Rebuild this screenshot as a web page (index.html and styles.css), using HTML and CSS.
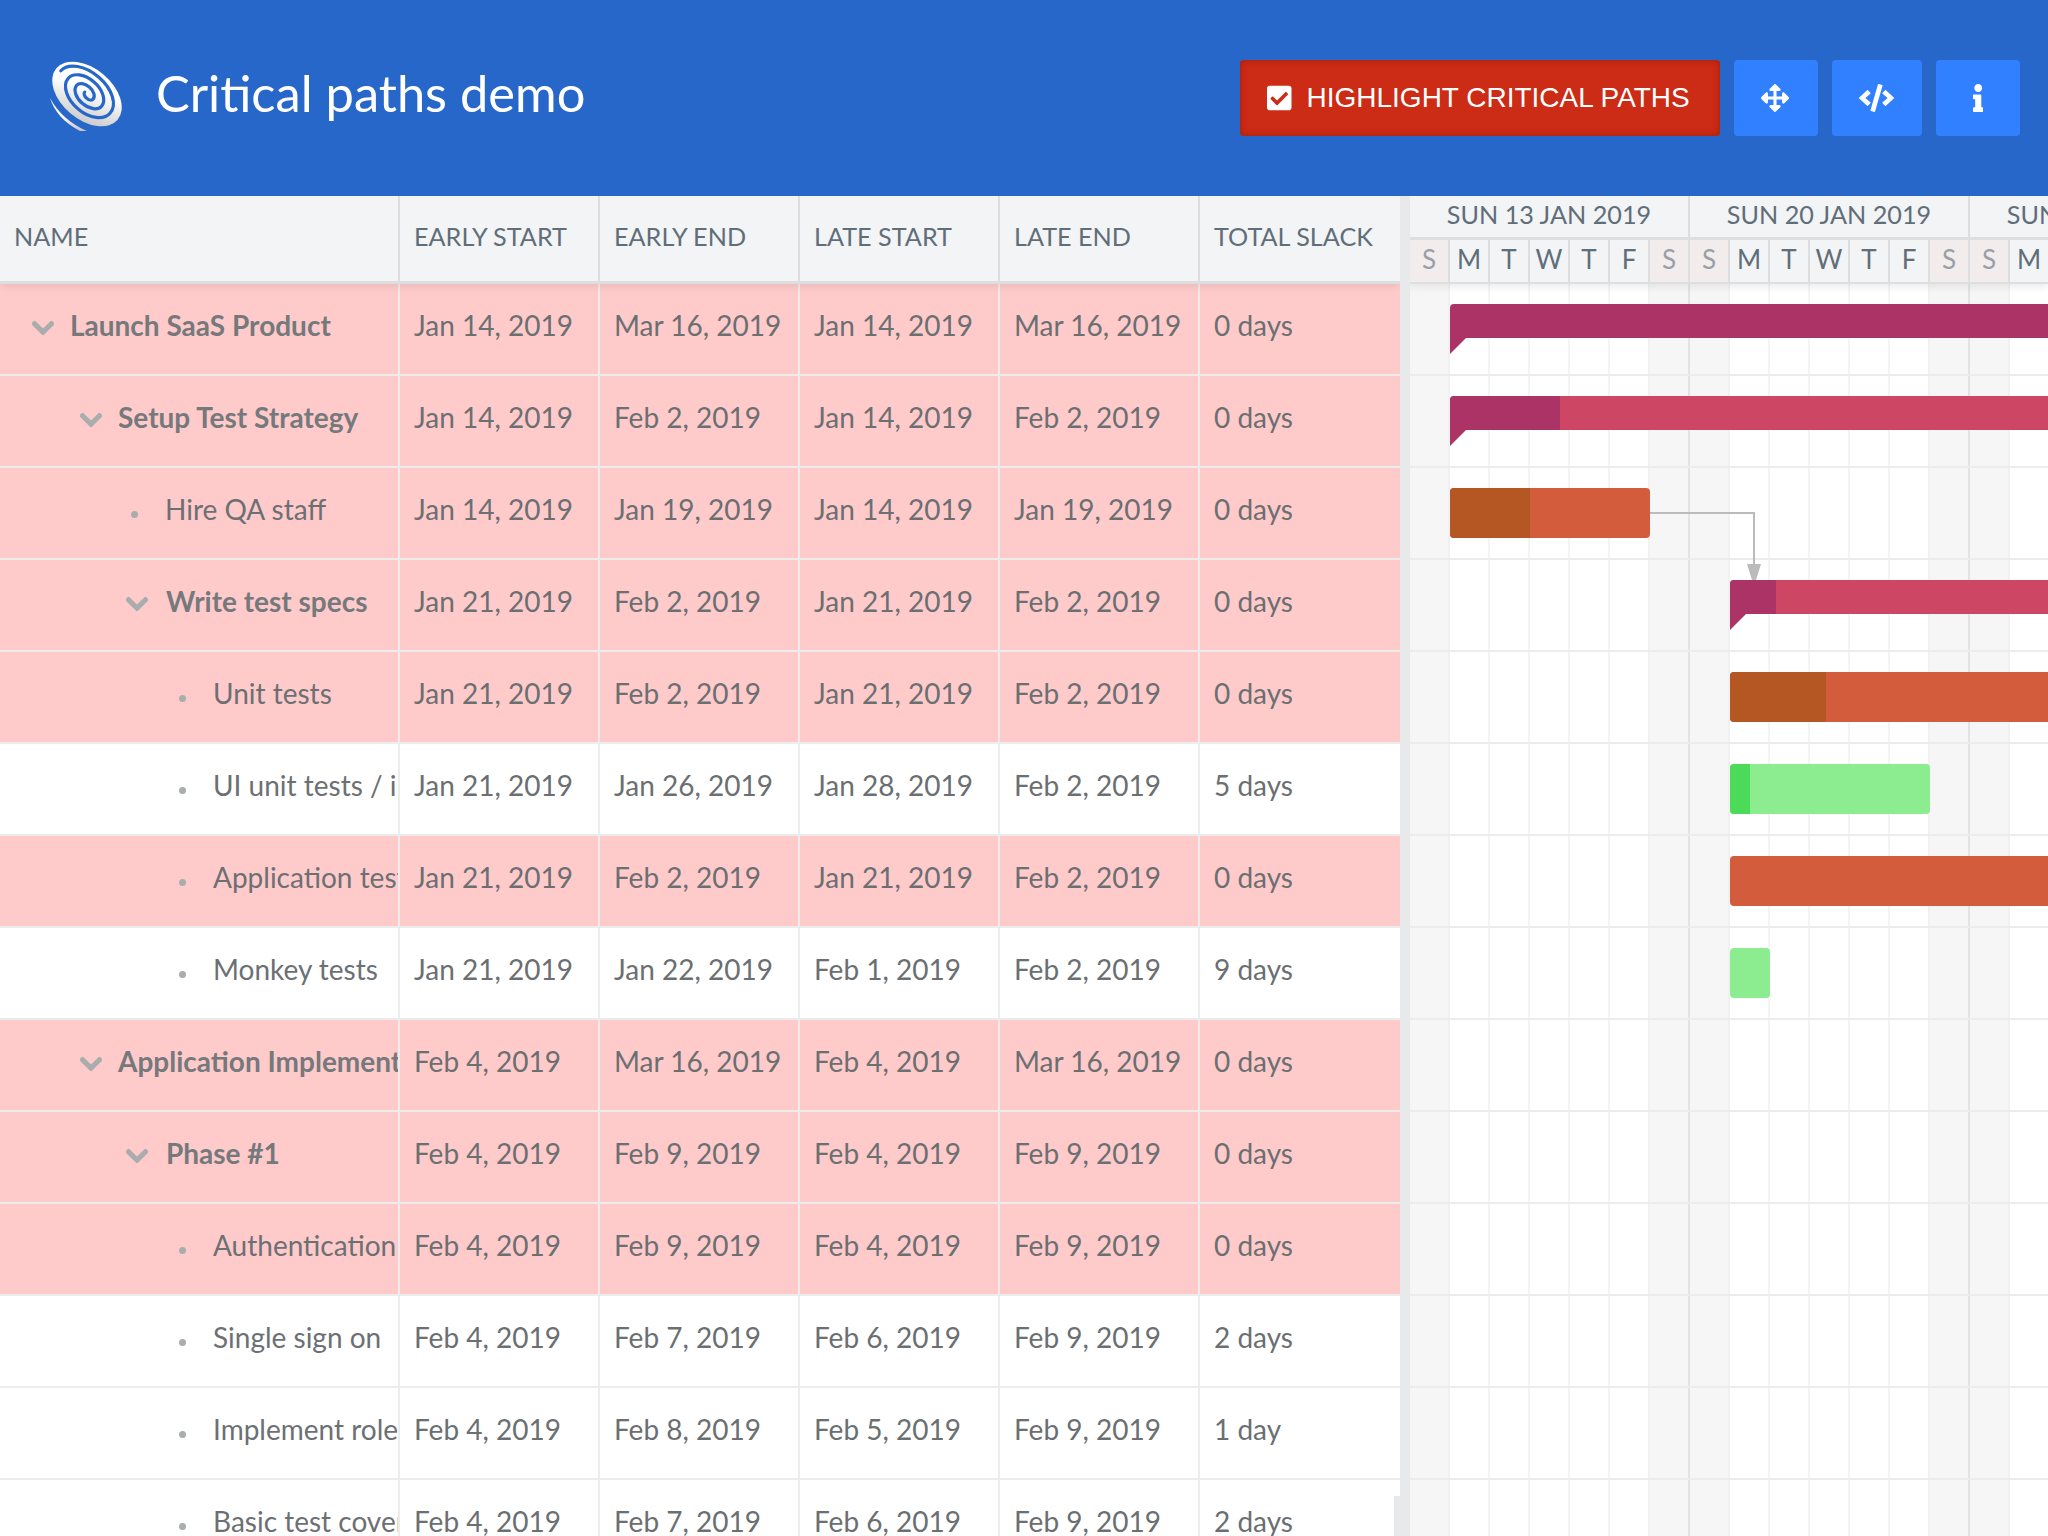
FILE: index.html
```html
<!DOCTYPE html>
<html lang="en">
<head>
<meta charset="utf-8">
<title>Critical paths demo</title>
<link rel="stylesheet" href="styles.css">
</head>
<body>
<svg class="defs" width="0" height="0" aria-hidden="true">
  <defs>
    <symbol id="chev" viewBox="0 0 448 512"><path d="M207.029 381.476L12.686 187.132c-9.373-9.373-9.373-24.569 0-33.941l22.667-22.667c9.357-9.357 24.522-9.375 33.901-.04L224 284.505l154.745-154.021c9.379-9.335 24.544-9.317 33.901.04l22.667 22.667c9.373 9.373 9.373 24.569 0 33.941L240.971 381.476c-9.373 9.372-24.569 9.372-33.942 0z"/></symbol>
    <linearGradient id="logoGrad" x1="0.2" y1="0" x2="0.8" y2="1"><stop offset="0.4" stop-color="#ffffff"/><stop offset="1" stop-color="#c6c6c6"/></linearGradient>
  </defs>
</svg>
<header class="topbar">
  <svg class="logo" viewBox="0 0 74 72" aria-hidden="true">
    <path class="logo-tail" d="M0 37 C4 50 14 62 30 70 L37 70 C21 63 8 52 0 37Z"/>
    <g transform="translate(37 33) rotate(40)">
      <ellipse class="lw" cx="0" cy="0" rx="40" ry="25.5"/>
      <path class="spiral" d="M-35 -1A32.5 20 0 0 1 30 0A27 17 0 0 1 -24.5 0A21.5 13.5 0 0 1 19 0A16 10 0 0 1 -13.5 0A10.7 6.8 0 0 1 8 0A5.5 3.5 0 0 1 -3 0"/>
    </g>
  </svg>
  <h1 class="title">Critical paths demo</h1>
  <div class="actions">
    <button class="btn btn-critical" type="button">
      <svg class="btn-check" viewBox="0 0 448 512"><path d="M400 480H48c-26.51 0-48-21.49-48-48V80c0-26.51 21.49-48 48-48h352c26.51 0 48 21.49 48 48v352c0 26.51-21.49 48-48 48zm-204.686-98.059l184-184c6.248-6.248 6.248-16.379 0-22.627l-22.627-22.627c-6.248-6.248-16.379-6.249-22.628 0L184 302.745l-70.059-70.059c-6.248-6.248-16.379-6.248-22.628 0l-22.627 22.627c-6.248 6.248-6.248 16.379 0 22.627l104 104c6.249 6.25 16.379 6.25 22.628.001z"/></svg>
      <span>HIGHLIGHT CRITICAL PATHS</span>
    </button>
    <button class="btn btn-icon btn-move" type="button" aria-label="Move"><svg viewBox="0 0 512 512"><path d="M352.201 425.775l-79.196 79.196c-9.373 9.373-24.568 9.373-33.941 0l-79.196-79.196c-15.119-15.119-4.411-40.971 16.971-40.97h51.162L228 284H127.196v51.162c0 21.382-25.851 32.09-40.971 16.971L7.029 272.937c-9.373-9.373-9.373-24.569 0-33.941L86.225 159.8c15.119-15.119 40.971-4.411 40.971 16.971V228H228V127.196h-51.23c-21.382 0-32.09-25.851-16.971-40.971l79.196-79.196c9.373-9.373 24.568-9.373 33.941 0l79.196 79.196c15.119 15.119 4.411 40.971-16.971 40.971h-51.162V228h100.804v-51.162c0-21.382 25.851-32.09 40.97-16.971l79.196 79.196c9.373 9.373 9.373 24.569 0 33.941L425.773 352.2c-15.119 15.119-40.971 4.411-40.97-16.971V284H284v100.804h51.23c21.382 0 32.09 25.851 16.971 40.971z"/></svg></button>
    <button class="btn btn-icon btn-code" type="button" aria-label="Code"><svg viewBox="0 0 640 512"><path d="M278.9 511.5l-61-17.7c-6.4-1.8-10-8.5-8.2-14.9L346.2 8.7c1.8-6.4 8.5-10 14.9-8.2l61 17.7c6.4 1.8 10 8.5 8.2 14.9L293.8 503.3c-1.9 6.4-8.5 10.1-14.9 8.2zm-114-112.2l43.5-46.4c4.6-4.9 4.3-12.7-.8-17.2L117 256l90.6-79.7c5.1-4.5 5.5-12.3.8-17.2l-43.5-46.4c-4.5-4.8-12.1-5.1-17-.5L3.8 247.2c-5.1 4.7-5.1 12.8 0 17.5l144.1 135.1c4.9 4.6 12.5 4.4 17-.5zm327.2.6l144.1-135.1c5.1-4.7 5.1-12.8 0-17.5L492.1 112.1c-4.8-4.5-12.4-4.3-17 .5L431.6 159c-4.6 4.9-4.3 12.7.8 17.2L523 256l-90.6 79.7c-5.1 4.5-5.5 12.3-.8 17.2l43.5 46.4c4.5 4.9 12.1 5.1 17 .6z"/></svg></button>
    <button class="btn btn-icon btn-info" type="button" aria-label="Info"><svg viewBox="0 0 192 512"><path d="M20 424.229h20V279.771H20c-11.046 0-20-8.954-20-20V212c0-11.046 8.954-20 20-20h112c11.046 0 20 8.954 20 20v212.229h20c11.046 0 20 8.954 20 20V492c0 11.046-8.954 20-20 20H20c-11.046 0-20-8.954-20-20v-47.771c0-11.046 8.954-20 20-20zM96 0C56.235 0 24 32.235 24 72s32.235 72 72 72 72-32.235 72-72S135.764 0 96 0z"/></svg></button>
  </div>
</header>

<main class="gantt">
  <section class="grid">
    <div class="grid-head">
      <div class="hcell name">NAME</div>
      <div class="hcell">EARLY START</div>
      <div class="hcell">EARLY END</div>
      <div class="hcell">LATE START</div>
      <div class="hcell">LATE END</div>
      <div class="hcell">TOTAL SLACK</div>
    </div>
    <div class="row critical">
      <div class="cell name lv0 parent"><svg class="chev"><use href="#chev"/></svg><span class="label">Launch SaaS Product</span></div>
      <div class="cell">Jan 14, 2019</div><div class="cell">Mar 16, 2019</div><div class="cell">Jan 14, 2019</div><div class="cell">Mar 16, 2019</div><div class="cell">0 days</div>
    </div>
    <div class="row critical">
      <div class="cell name lv1 parent"><svg class="chev"><use href="#chev"/></svg><span class="label">Setup Test Strategy</span></div>
      <div class="cell">Jan 14, 2019</div><div class="cell">Feb 2, 2019</div><div class="cell">Jan 14, 2019</div><div class="cell">Feb 2, 2019</div><div class="cell">0 days</div>
    </div>
    <div class="row critical">
      <div class="cell name lv2"><i class="dot"></i><span class="label">Hire QA staff</span></div>
      <div class="cell">Jan 14, 2019</div><div class="cell">Jan 19, 2019</div><div class="cell">Jan 14, 2019</div><div class="cell">Jan 19, 2019</div><div class="cell">0 days</div>
    </div>
    <div class="row critical">
      <div class="cell name lv2 parent"><svg class="chev"><use href="#chev"/></svg><span class="label">Write test specs</span></div>
      <div class="cell">Jan 21, 2019</div><div class="cell">Feb 2, 2019</div><div class="cell">Jan 21, 2019</div><div class="cell">Feb 2, 2019</div><div class="cell">0 days</div>
    </div>
    <div class="row critical">
      <div class="cell name lv3"><i class="dot"></i><span class="label">Unit tests</span></div>
      <div class="cell">Jan 21, 2019</div><div class="cell">Feb 2, 2019</div><div class="cell">Jan 21, 2019</div><div class="cell">Feb 2, 2019</div><div class="cell">0 days</div>
    </div>
    <div class="row">
      <div class="cell name lv3"><i class="dot"></i><span class="label">UI unit tests / interaction</span></div>
      <div class="cell">Jan 21, 2019</div><div class="cell">Jan 26, 2019</div><div class="cell">Jan 28, 2019</div><div class="cell">Feb 2, 2019</div><div class="cell">5 days</div>
    </div>
    <div class="row critical">
      <div class="cell name lv3"><i class="dot"></i><span class="label">Application tests</span></div>
      <div class="cell">Jan 21, 2019</div><div class="cell">Feb 2, 2019</div><div class="cell">Jan 21, 2019</div><div class="cell">Feb 2, 2019</div><div class="cell">0 days</div>
    </div>
    <div class="row">
      <div class="cell name lv3"><i class="dot"></i><span class="label">Monkey tests</span></div>
      <div class="cell">Jan 21, 2019</div><div class="cell">Jan 22, 2019</div><div class="cell">Feb 1, 2019</div><div class="cell">Feb 2, 2019</div><div class="cell">9 days</div>
    </div>
    <div class="row critical">
      <div class="cell name lv1 parent"><svg class="chev"><use href="#chev"/></svg><span class="label">Application Implementation</span></div>
      <div class="cell">Feb 4, 2019</div><div class="cell">Mar 16, 2019</div><div class="cell">Feb 4, 2019</div><div class="cell">Mar 16, 2019</div><div class="cell">0 days</div>
    </div>
    <div class="row critical">
      <div class="cell name lv2 parent"><svg class="chev"><use href="#chev"/></svg><span class="label">Phase #1</span></div>
      <div class="cell">Feb 4, 2019</div><div class="cell">Feb 9, 2019</div><div class="cell">Feb 4, 2019</div><div class="cell">Feb 9, 2019</div><div class="cell">0 days</div>
    </div>
    <div class="row critical">
      <div class="cell name lv3"><i class="dot"></i><span class="label">Authentication</span></div>
      <div class="cell">Feb 4, 2019</div><div class="cell">Feb 9, 2019</div><div class="cell">Feb 4, 2019</div><div class="cell">Feb 9, 2019</div><div class="cell">0 days</div>
    </div>
    <div class="row">
      <div class="cell name lv3"><i class="dot"></i><span class="label">Single sign on</span></div>
      <div class="cell">Feb 4, 2019</div><div class="cell">Feb 7, 2019</div><div class="cell">Feb 6, 2019</div><div class="cell">Feb 9, 2019</div><div class="cell">2 days</div>
    </div>
    <div class="row">
      <div class="cell name lv3"><i class="dot"></i><span class="label">Implement roles</span></div>
      <div class="cell">Feb 4, 2019</div><div class="cell">Feb 8, 2019</div><div class="cell">Feb 5, 2019</div><div class="cell">Feb 9, 2019</div><div class="cell">1 day</div>
    </div>
    <div class="row">
      <div class="cell name lv3"><i class="dot"></i><span class="label">Basic test coverage</span></div>
      <div class="cell">Feb 4, 2019</div><div class="cell">Feb 7, 2019</div><div class="cell">Feb 6, 2019</div><div class="cell">Feb 9, 2019</div><div class="cell">2 days</div>
    </div>
    <div class="scroll-thumb"></div>
  </section>

  <div class="splitter"></div>

  <section class="timeline">
    <div class="time-head">
      <div class="week"><div class="week-title">SUN 13 JAN 2019</div><div class="days"><span class="we">S</span><span>M</span><span>T</span><span>W</span><span>T</span><span>F</span><span class="we">S</span></div></div>
      <div class="week"><div class="week-title">SUN 20 JAN 2019</div><div class="days"><span class="we">S</span><span>M</span><span>T</span><span>W</span><span>T</span><span>F</span><span class="we">S</span></div></div>
      <div class="week"><div class="week-title">SUN 27 JAN 2019</div><div class="days"><span class="we">S</span><span>M</span><span>T</span><span>W</span><span>T</span><span>F</span><span class="we">S</span></div></div>
    </div>
    <div class="time-body">
      <div class="trow"><div class="bar summary done" style="left:40px;width:1600px"></div></div>
      <div class="trow"><div class="bar summary" style="left:40px;width:1600px"><div class="prog" style="width:110px"></div></div></div>
      <div class="trow"><div class="bar task crit" style="left:40px;width:200px"><div class="prog" style="width:80px"></div></div></div>
      <div class="trow"><div class="bar summary" style="left:320px;width:1200px"><div class="prog" style="width:46px"></div></div></div>
      <div class="trow"><div class="bar task crit" style="left:320px;width:1200px"><div class="prog" style="width:96px"></div></div></div>
      <div class="trow"><div class="bar task ok" style="left:320px;width:200px"><div class="prog" style="width:20px"></div></div></div>
      <div class="trow"><div class="bar task crit" style="left:320px;width:1200px"></div></div>
      <div class="trow"><div class="bar task ok" style="left:320px;width:40px"></div></div>
      <div class="trow"></div>
      <div class="trow"></div>
      <div class="trow"></div>
      <div class="trow"></div>
      <div class="trow"></div>
      <div class="trow"></div>
      <svg class="links" width="638" height="320" aria-hidden="true">
        <path class="link-line" d="M240 229H344V282"/>
        <polygon class="link-arrow" points="337,280 351,280 346,296 342,296"/>
      </svg>
    </div>
  </section>
</main>
</body>
</html>
```

FILE: styles.css
```css
* { box-sizing: border-box; }
html, body { margin: 0; height: 100%; overflow: hidden; }
body { font-family: Lato, "Open Sans", sans-serif; background: #fff; color: #606e7a; }
.defs { position: absolute; }

.topbar { height: 196px; background: #2767c9; display: flex; align-items: center; padding: 0 28px 0 50px; }
.logo { width: 74px; height: 72px; flex: none; margin-right: 32px; margin-top: -2px; }
.logo .lw, .logo-tail { fill: url(#logoGrad); }
.spiral { fill: none; stroke: #2767c9; stroke-width: 3.2px; stroke-linecap: round; }
.title { margin: 0 0 10px; font-size: 50.6px; font-weight: 400; color: #fff; line-height: 1; }
.actions { margin-left: auto; display: flex; gap: 14px; }
.btn { height: 76px; border: 0; border-radius: 4px; color: #fff; display: flex; align-items: center; justify-content: center; padding: 0; }
.btn svg { height: 28px; fill: #fff; display: block; }
.btn-critical { width: 480px; background: #cc2b15; box-shadow: inset 0 0 6px rgba(120, 20, 0, .55); font: 28px "Liberation Sans", Arial, sans-serif; justify-content: flex-start; padding-left: 27px; }
.btn-check { width: 24.5px; margin-right: 15px; }
.btn-icon { background: #3080ff; }
.btn-move { width: 84px; padding-right: 2px; }
.btn-move svg { width: 28px; }
.btn-code { width: 90px; padding-right: 2px; }
.btn-code svg { width: 35px; }
.btn-info { width: 84px; }
.btn-info svg { width: 10.5px; }

.gantt { display: flex; height: 1340px; }
.grid { width: 1400px; flex: none; position: relative; overflow: hidden; }
.grid-head { display: flex; height: 88px; background: #f3f4f6; border-bottom: 3px solid #dcdee0; position: relative; box-shadow: 0 3px 8px rgba(0, 0, 0, .08); }
.hcell { width: 200px; padding: 0 0 6px 14px; border-right: 2px solid #dcdee0; display: flex; align-items: center; font-size: 25.2px; color: #606e7a; white-space: nowrap; }
.hcell:last-child { border-right: 0; }
.hcell.name { width: 400px; }
.row { display: flex; height: 92px; border-bottom: 2px solid #ececec; background: #fff; font-size: 28px; color: #6b6f72; }
.row.critical { background: #ffcaca; }
.cell { width: 200px; padding: 0 0 8px 14px; border-right: 2px solid #ececec; display: flex; align-items: center; white-space: nowrap; overflow: hidden; }
.cell:last-child { border-right: 0; }
.cell.name { width: 400px; padding-left: 32px; color: #6c7074; }
.cell.lv1 { padding-left: 80px; }
.cell.lv2 { padding-left: 128px; }
.cell.lv3 { padding-left: 176px; }
.chev { width: 22px; height: 26px; fill: #a9adae; stroke: #a9adae; stroke-width: 24px; flex: none; margin: 6px 16px 0 0; }
.lv2 .chev { margin-left: -2px; margin-right: 18px; }
.dot { width: 7px; height: 7px; border-radius: 50%; background: #a9adae; flex: none; margin: 10px 27px 0 3px; }
.parent .label { font-weight: 700; color: #75797c; }
.scroll-thumb { position: absolute; right: 0; top: 1300px; width: 6px; height: 60px; background: #e8e9eb; }
.splitter { width: 10px; flex: none; background: #e8e9eb; }

.timeline { flex: 1; min-width: 0; overflow: hidden; position: relative; }
.time-head { display: flex; height: 88px; background: #f3f4f6; border-bottom: 2px solid #dcdee0; position: relative; z-index: 1; box-shadow: 0 3px 8px rgba(0, 0, 0, .08); }
.week { width: 280px; flex: none; border-right: 2px solid #dcdee0; }
.week-title { height: 44px; padding-bottom: 5px; border-bottom: 3px solid #dcdee0; display: flex; align-items: center; justify-content: center; font-size: 25.2px; color: #606e7a; white-space: nowrap; }
.days { display: flex; height: 42px; }
.days span { width: 40px; padding-bottom: 4px; border-right: 2px solid #dcdee0; display: flex; align-items: center; justify-content: center; font-size: 26px; color: #606e7a; }
.days span:last-child { width: 38px; border-right: 0; }
.days .we { background: #f3ecec; color: #9a9ea6; }

.time-body { position: relative; background-color: #fff;
  background-image: linear-gradient(90deg,
    #f6f6f6 0 38px, #f1f1f1 38px 40px,
    #fff 40px 78px, #f4f4f4 78px 80px,
    #fff 80px 118px, #f4f4f4 118px 120px,
    #fff 120px 158px, #f4f4f4 158px 160px,
    #fff 160px 198px, #f4f4f4 198px 200px,
    #fff 200px 238px, #f1f1f1 238px 240px,
    #f6f6f6 240px 278px, #e3e3e3 278px 280px);
  background-size: 280px 100%;
}
.trow { height: 92px; border-bottom: 2px solid #ececec; position: relative; }
.bar { position: absolute; top: 20px; }
.bar .prog { height: 100%; }
.summary { height: 34px; background: #cd4765; border-top-left-radius: 4px; }
.summary .prog, .summary.done { background: #ab3366; border-top-left-radius: 4px; }
.summary::after { content: ""; position: absolute; left: 0; top: 100%; width: 16px; height: 16px; background: #ab3366; clip-path: polygon(0 0, 100% 0, 0 100%); }
.task { height: 50px; border-radius: 4px; overflow: hidden; }
.crit { background: #d25c3b; }
.crit .prog { background: #b45722; }
.ok { background: #8cec90; }
.ok .prog { background: #4bdb59; }
.links { position: absolute; left: 0; top: 0; }
.link-line { fill: none; stroke: #bbb; stroke-width: 2px; }
.link-arrow { fill: #bbb; }
```
